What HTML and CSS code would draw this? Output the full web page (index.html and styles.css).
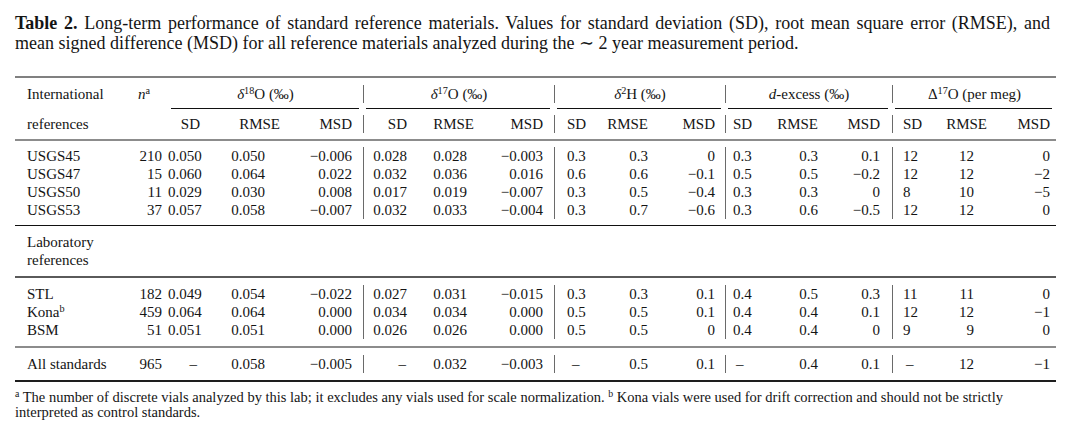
FILE: index.html
```html
<!DOCTYPE html>
<html lang="en">
<head>
<meta charset="utf-8">
<title>Table 2</title>
<link rel="stylesheet" href="styles.css">
</head>
<body>
<div class="page">
  <p class="caption"><b>Table 2.</b> Long-term performance of standard reference materials. Values for standard deviation (SD), root mean square error (RMSE), and mean signed difference (MSD) for all reference materials analyzed during the ∼ 2 year measurement period.</p>
  <table class="tbl">
    <colgroup>
      <col class="c1"><col class="c2"><col class="c3"><col class="c4"><col class="c5"><col class="c6"><col class="c7"><col class="c8"><col class="c9"><col class="c10"><col class="c11"><col class="c12"><col class="c13"><col class="c14"><col class="c15"><col class="c16"><col class="c17">
    </colgroup>
    <tbody>
      <tr class="rl r-top"><td colspan="17"><div class="ln"></div></td></tr>
      <tr class="h1">
        <th class="lb">International</th>
        <th class="nh"><i>n</i><sup>a</sup></th>
        <th colspan="3" class="grp"><i>δ</i><sup>18</sup>O (‰)</th>
        <th colspan="3" class="grp"><i>δ</i><sup>17</sup>O (‰)</th>
        <th colspan="3" class="grp"><i>δ</i><sup>2</sup>H (‰)</th>
        <th colspan="3" class="grp"><i>d</i>-excess (‰)</th>
        <th colspan="3" class="grp">Δ<sup>17</sup>O (per meg)</th>
      </tr>
      <tr class="cm">
        <td colspan="2"></td>
        <td colspan="3"><div class="cl"></div></td>
        <td colspan="3"><div class="cl"></div></td>
        <td colspan="3"><div class="cl"></div></td>
        <td colspan="3"><div class="cl"></div></td>
        <td colspan="3"><div class="cl"></div></td>
      </tr>
      <tr class="h2">
        <th>references</th><th></th>
        <th>SD</th><th>RMSE</th><th>MSD</th>
        <th>SD</th><th>RMSE</th><th>MSD</th>
        <th>SD</th><th>RMSE</th><th>MSD</th>
        <th>SD</th><th>RMSE</th><th>MSD</th>
        <th>SD</th><th>RMSE</th><th>MSD</th>
      </tr>
      <tr class="rl r-gray"><td colspan="17"><div class="ln"></div></td></tr>
      <tr class="d"><td>USGS45</td><td>210</td><td>0.050</td><td>0.050</td><td>−0.006</td><td>0.028</td><td>0.028</td><td>−0.003</td><td>0.3</td><td>0.3</td><td>0</td><td>0.3</td><td>0.3</td><td>0.1</td><td>12</td><td>12</td><td>0</td></tr>
      <tr class="d"><td>USGS47</td><td>15</td><td>0.060</td><td>0.064</td><td>0.022</td><td>0.032</td><td>0.036</td><td>0.016</td><td>0.6</td><td>0.6</td><td>−0.1</td><td>0.5</td><td>0.5</td><td>−0.2</td><td>12</td><td>12</td><td>−2</td></tr>
      <tr class="d"><td>USGS50</td><td>11</td><td>0.029</td><td>0.030</td><td>0.008</td><td>0.017</td><td>0.019</td><td>−0.007</td><td>0.3</td><td>0.5</td><td>−0.4</td><td>0.3</td><td>0.3</td><td>0</td><td>8</td><td>10</td><td>−5</td></tr>
      <tr class="d"><td>USGS53</td><td>37</td><td>0.057</td><td>0.058</td><td>−0.007</td><td>0.032</td><td>0.033</td><td>−0.004</td><td>0.3</td><td>0.7</td><td>−0.6</td><td>0.3</td><td>0.6</td><td>−0.5</td><td>12</td><td>12</td><td>0</td></tr>
      <tr class="rl r-dark"><td colspan="17"><div class="ln"></div></td></tr>
      <tr class="labrow"><td colspan="17">Laboratory<br>references</td></tr>
      <tr class="rl r-mid"><td colspan="17"><div class="ln"></div></td></tr>
      <tr class="d"><td>STL</td><td>182</td><td>0.049</td><td>0.054</td><td>−0.022</td><td>0.027</td><td>0.031</td><td>−0.015</td><td>0.3</td><td>0.3</td><td>0.1</td><td>0.4</td><td>0.5</td><td>0.3</td><td>11</td><td>11</td><td>0</td></tr>
      <tr class="d"><td>Kona<sup>b</sup></td><td>459</td><td>0.064</td><td>0.064</td><td>0.000</td><td>0.034</td><td>0.034</td><td>0.000</td><td>0.5</td><td>0.5</td><td>0.1</td><td>0.4</td><td>0.4</td><td>0.1</td><td>12</td><td>12</td><td>−1</td></tr>
      <tr class="d"><td>BSM</td><td>51</td><td>0.051</td><td>0.051</td><td>0.000</td><td>0.026</td><td>0.026</td><td>0.000</td><td>0.5</td><td>0.5</td><td>0</td><td>0.4</td><td>0.4</td><td>0</td><td>9</td><td>9</td><td>0</td></tr>
      <tr class="rl r-gray2"><td colspan="17"><div class="ln"></div></td></tr>
      <tr class="d all"><td>All standards</td><td>965</td><td>–</td><td>0.058</td><td>−0.005</td><td>–</td><td>0.032</td><td>−0.003</td><td>–</td><td>0.5</td><td>0.1</td><td>–</td><td>0.4</td><td>0.1</td><td>–</td><td>12</td><td>−1</td></tr>
      <tr class="rl r-bot"><td colspan="17"><div class="ln"></div></td></tr>
    </tbody>
  </table>
  <p class="notes"><sup>a</sup> The number of discrete vials analyzed by this lab; it excludes any vials used for scale normalization. <sup>b</sup> Kona vials were used for drift correction and should not be strictly interpreted as control standards.</p>
</div>
</body>
</html>
```

FILE: styles.css
```css
html, body {
  margin: 0;
  padding: 0;
  background: #ffffff;
}

body {
  font-family: "Liberation Serif", "Times New Roman", "DejaVu Serif", serif;
  color: #141414;
}

.page {
  width: 1041px;
  padding: 13px 14px 0 15px;
}

.caption {
  width: 1035px;
  margin: 0 0 23px;
  font-size: 18px;
  line-height: 20px;
  text-align: justify;
}

.caption b {
  font-weight: bold;
}

sup {
  font-size: 68%;
  line-height: 0;
  vertical-align: 0.48em;
}

.tbl {
  width: 1041px;
  table-layout: fixed;
  border-collapse: separate;
  border-spacing: 0;
  font-size: 15px;
  line-height: 18px;
}

.c1 { width: 105px; }
.c2 { width: 48px; }
.c3 { width: 38px; }
.c4 { width: 80px; }
.c5 { width: 77px; }
.c6 { width: 50px; }
.c7 { width: 67px; }
.c8 { width: 74px; }
.c9 { width: 46px; }
.c10 { width: 54px; }
.c11 { width: 71px; }
.c12 { width: 45px; }
.c13 { width: 54px; }
.c14 { width: 68px; }
.c15 { width: 45px; }
.c16 { width: 56px; }
.c17 { width: 63px; }

.tbl th {
  font-weight: normal;
}

.tbl td, .tbl th {
  padding: 0 6px 0 0;
  white-space: nowrap;
  text-align: right;
}

/* rules (booktabs style, vertical bars break around them) */
.rl td {
  padding: 7px 0;
}
.rl .ln {
  height: 1px;
  background: #222;
}
.r-top td { padding: 0 0 7px; }
.r-top .ln { height: 2px; background: #808080; }
.r-gray td { padding: 6px 0; }
.r-gray .ln { height: 2px; background: #8c8c8c; }
.r-dark td { padding: 6px 0 7px; }
.r-dark .ln { height: 1px; background: #111; }
.r-mid .ln { height: 2px; background: #5a5a5a; }
.r-gray2 .ln { height: 2px; background: #8c8c8c; }
.r-bot td { padding: 7px 0 0; }
.r-bot .ln { height: 2px; background: #1e1e1e; }

/* header row 1 */
.h1 .lb {
  text-align: left;
  padding-left: 12px;
}
.h1 .nh {
  text-align: center;
  padding-right: 0;
}
.h1 .grp {
  text-align: center;
  padding-right: 0;
}
.h1 .grp + .grp {
  border-left: 1px solid #6a6a6a;
}

/* cmidrule row */
.cm td {
  padding: 5px 0 6px;
}
.cm .cl {
  height: 1px;
  background: #111;
  margin: 0 4px 0 3px;
}

/* columns of header row 2 and data rows */
.h2 th:nth-child(1), .d td:nth-child(1) {
  text-align: left;
  padding-left: 12px;
}
.h2 th:nth-child(6), .d td:nth-child(6),
.h2 th:nth-child(9), .d td:nth-child(9),
.h2 th:nth-child(12), .d td:nth-child(12),
.h2 th:nth-child(15), .d td:nth-child(15) {
  border-left: 1px solid #6a6a6a;
}
.d td:nth-child(4) { padding-right: 21px; }
.h2 th:nth-child(5), .d td:nth-child(5) { padding-right: 11px; }
.d td:nth-child(7) { padding-right: 13px; }
.h2 th:nth-child(8), .d td:nth-child(8) { padding-right: 11px; }
.h2 th:nth-child(9), .d td:nth-child(9) { text-align: left; padding-left: 12px; }
.h2 th:nth-child(11), .d td:nth-child(11) { padding-right: 10px; }
.h2 th:nth-child(12), .d td:nth-child(12) { text-align: left; padding-left: 7px; }
.h2 th:nth-child(14), .d td:nth-child(14) { padding-right: 12px; }
.h2 th:nth-child(15), .d td:nth-child(15) { text-align: left; padding-left: 10px; }
.d td:nth-child(16) { padding-right: 19px; }

/* dashes in the last row */
.all td:nth-child(3) { padding-right: 9px; }
.all td:nth-child(6) { padding-right: 7px; }
.all td:nth-child(9) { padding-left: 17px; }
.all td:nth-child(12) { padding-left: 10px; }
.all td:nth-child(15) { padding-left: 13px; }

/* laboratory references row */
.labrow td {
  text-align: left;
  padding: 0 0 0 12px;
}

.notes {
  width: 1035px;
  margin: 8px 0 0;
  font-size: 14.5px;
  line-height: 15px;
}
```
